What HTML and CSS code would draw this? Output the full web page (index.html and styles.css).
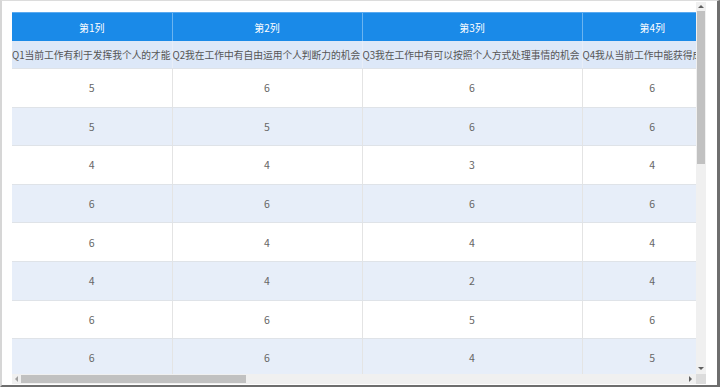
FILE: index.html
```html
<!DOCTYPE html>
<html lang="zh-CN">
<head>
<meta charset="utf-8">
<title>表格</title>
<link rel="stylesheet" href="styles.css">
</head>
<body>
<div class="frame">
  <div class="grid">
    <div class="viewport">
      <table class="data">
        <colgroup>
          <col class="c1"><col class="c2"><col class="c3"><col class="c4">
        </colgroup>
        <thead>
          <tr><th>第1列</th><th>第2列</th><th>第3列</th><th>第4列</th></tr>
        </thead>
        <tbody>
          <tr class="q"><td>Q1当前工作有利于发挥我个人的才能</td><td>Q2我在工作中有自由运用个人判断力的机会</td><td>Q3我在工作中有可以按照个人方式处理事情的机会</td><td>Q4我从当前工作中能获得成就感</td></tr>
          <tr><td>5</td><td>6</td><td>6</td><td>6</td></tr>
          <tr class="alt"><td>5</td><td>5</td><td>6</td><td>6</td></tr>
          <tr><td>4</td><td>4</td><td>3</td><td>4</td></tr>
          <tr class="alt"><td>6</td><td>6</td><td>6</td><td>6</td></tr>
          <tr><td>6</td><td>4</td><td>4</td><td>4</td></tr>
          <tr class="alt"><td>4</td><td>4</td><td>2</td><td>4</td></tr>
          <tr><td>6</td><td>6</td><td>5</td><td>6</td></tr>
          <tr class="alt"><td>6</td><td>6</td><td>4</td><td>5</td></tr>
        </tbody>
      </table>
    </div>
    <div class="vscroll">
      <span class="arrow up"></span>
      <div class="vtrack"><div class="vthumb"></div></div>
      <span class="arrow down"></span>
    </div>
    <div class="hscroll">
      <span class="arrow left"></span>
      <div class="htrack"><div class="hthumb"></div></div>
      <span class="arrow right"></span>
    </div>
    <div class="corner"></div>
  </div>
</div>
</body>
</html>
```

FILE: styles.css
```css
html, body {
  margin: 0;
  padding: 0;
  background: #ffffff;
}

.frame {
  box-sizing: border-box;
  width: 720px;
  height: 387px;
  border-left: 2px solid #d6d6d6;
  border-top: 1px solid #dcdcdc;
  border-right: 3px solid #6e6e6e;
  border-bottom: 2px solid #6e6e6e;
  background: #ffffff;
  padding: 1px 0 0 10px;
  font-family: "Noto Sans CJK SC", "Noto Sans", sans-serif;
}

.grid {
  display: grid;
  grid-template-columns: 684px 10px;
  grid-template-rows: 372px 10px;
}

.viewport {
  overflow: hidden;
  padding-top: 10px;
  box-sizing: border-box;
}

.data {
  border-collapse: collapse;
  table-layout: fixed;
  width: 710px;
}

.c1 { width: 160px; }
.c2 { width: 190px; }
.c3 { width: 220px; }
.c4 { width: 140px; }

.data th {
  height: 28px;
  padding: 0;
  background: #1a8ae8;
  color: #ffffff;
  font-weight: normal;
  font-size: 10px;
  text-align: center;
  border-left: 1px solid #6bb4f0;
  border-top: 1px solid #5aaaf0;
}

.data th:first-child { border-left: none; }

.data td {
  padding: 0;
  text-align: center;
  white-space: nowrap;
  font-size: 10.5px;
  color: #666666;
  border-left: 1px solid #e4e4e4;
  border-bottom: 1px solid #dfe3e8;
  height: 37.6px;
}

.data td:first-child { border-left: none; }

.data tr.q td {
  height: 27px;
  background: #dde8f8;
  color: #555555;
  font-size: 9.75px;
  letter-spacing: -0.02px;
  text-align: left;
  border-left-color: #e8eef8;
}

.data tr.alt td {
  background: #e7eef9;
}

.vscroll {
  grid-row: 1 / 2;
  grid-column: 2 / 3;
  display: flex;
  flex-direction: column;
  align-items: center;
  background: #f0f0f0;
}

.vtrack {
  flex: 1;
  width: 100%;
  display: flex;
  flex-direction: column;
  align-items: center;
}

.vthumb {
  width: 8px;
  height: 153px;
  background: #c1c1c1;
}

.hscroll {
  display: flex;
  align-items: center;
  background: #f0f0f0;
}

.htrack {
  flex: 1;
  height: 100%;
  display: flex;
  align-items: center;
}

.hthumb {
  width: 225px;
  height: 8px;
  background: #c1c1c1;
}

.corner {
  background: #dcdcdc;
}

.arrow {
  display: block;
  width: 0;
  height: 0;
  flex: none;
}

.arrow.up {
  margin: 3px 0 3px;
  border-left: 3px solid transparent;
  border-right: 3px solid transparent;
  border-bottom: 3px solid #606060;
}

.arrow.down {
  margin: 3px 0 4px;
  border-left: 3px solid transparent;
  border-right: 3px solid transparent;
  border-top: 3px solid #606060;
}

.arrow.left {
  margin: 0 3px 0 3px;
  border-top: 3px solid transparent;
  border-bottom: 3px solid transparent;
  border-right: 3px solid #a0a0a0;
}

.arrow.right {
  margin: 0 4px 0 3px;
  border-top: 3px solid transparent;
  border-bottom: 3px solid transparent;
  border-left: 3px solid #606060;
}
```
